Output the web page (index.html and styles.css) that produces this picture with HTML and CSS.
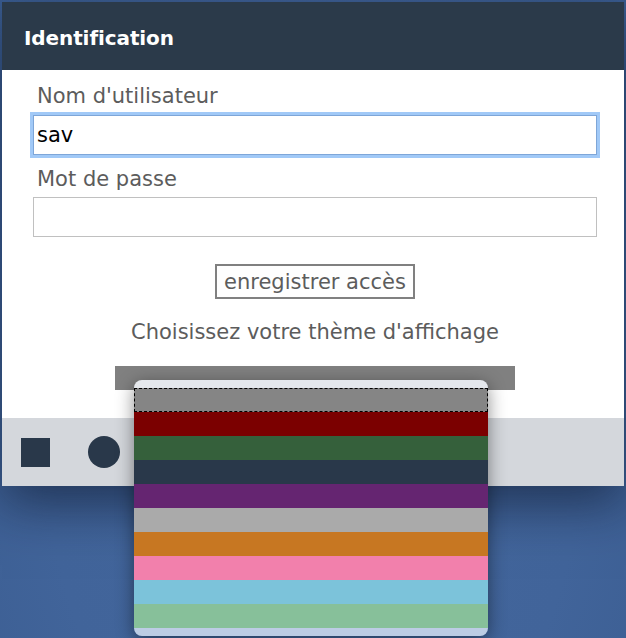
FILE: index.html
```
<!DOCTYPE html>
<html lang="fr">
<head>
    <meta charset="UTF-8">
    <meta name="viewport" content="width=device-width, initial-scale=1.0">
    <title>Identification</title>
    <link rel="stylesheet" href="styles.css">
</head>
<body>
    <div class="window">
        <header class="window-header">
            <h1>Identification</h1>
        </header>
        <div class="window-body">
            <label for="user" class="field-label">Nom d'utilisateur</label>
            <input type="text" id="user" class="field field-focus" value="sav">
            <label for="pass" class="field-label second">Mot de passe</label>
            <input type="password" id="pass" class="field">
            <div class="center">
                <button class="save-btn">enregistrer accès</button>
                <p class="theme-title">Choisissez votre thème d'affichage</p>
                <div class="theme-select"></div>
            </div>
        </div>
        <footer class="window-footer">
            <span class="shape square"></span>
            <span class="shape circle"></span>
        </footer>

        <ul class="theme-list">
            <li class="opt selected" style="background:#858585"></li>
            <li class="opt" style="background:#7b0000"></li>
            <li class="opt" style="background:#35603b"></li>
            <li class="opt" style="background:#29384a"></li>
            <li class="opt" style="background:#652571"></li>
            <li class="opt" style="background:#aaaaaa"></li>
            <li class="opt" style="background:#c77722"></li>
            <li class="opt" style="background:#f280ac"></li>
            <li class="opt" style="background:#7cc3da"></li>
            <li class="opt" style="background:#87c09a"></li>
        </ul>
    </div>
</body>
</html>
```

FILE: styles.css
```
html, body {
    height: 100%;
}

body {
    margin: 0;
    padding: 2px;
    box-sizing: border-box;
    font-family: 'DejaVu Sans', sans-serif;
    background: radial-gradient(ellipse at 50% 70%, #44679d 0%, #41649a 60%, #3a5c90 100%);
    overflow: hidden;
}

.window {
    position: relative;
    width: 622px;
    height: 484px;
    display: flex;
    flex-direction: column;
    background-color: white;
    box-shadow: 0 18px 50px rgba(10, 20, 40, 0.6);
}

.window-header {
    height: 68px;
    background-color: #2b3a4a;
    display: flex;
    align-items: center;
    padding-left: 22px;
    padding-top: 3px;
    box-sizing: border-box;
}

.window-header h1 {
    margin: 0;
    color: white;
    font-size: 20px;
    font-weight: bold;
    letter-spacing: -0.1px;
}

.window-body {
    flex-grow: 1;
    padding: 14px 27px 0 31px;
    display: flex;
    flex-direction: column;
}

.field-label {
    display: block;
    font-size: 21px;
    line-height: 24px;
    color: #5c5c5c;
    padding-left: 4px;
    margin-bottom: 7px;
}

.field-label.second {
    margin-top: 12px;
    margin-bottom: 6px;
}

.field {
    height: 40px;
    box-sizing: border-box;
    border: 1px solid #c0c0c0;
    padding: 0 3px;
    font-family: 'DejaVu Sans', sans-serif;
    font-size: 21px;
    color: black;
    outline: none;
    margin: 0;
}

.field-focus {
    border-color: #7ea6d8;
    box-shadow: 0 0 0 3px #a1c9f7;
}

.center {
    display: flex;
    flex-direction: column;
    align-items: center;
}

.save-btn {
    margin-top: 27px;
    width: 200px;
    height: 35px;
    box-sizing: border-box;
    border: 2px solid #808080;
    background-color: #fefefe;
    font-family: 'DejaVu Sans', sans-serif;
    font-size: 21px;
    color: #5c5c5c;
    padding: 0;
    border-radius: 0;
}

.theme-title {
    margin: 21px 0 0 0;
    font-size: 21px;
    line-height: 24px;
    color: #5c5c5c;
}

.theme-select {
    margin-top: 22px;
    width: 400px;
    height: 24px;
    background-color: #808080;
}

.window-footer {
    height: 68px;
    background-color: #d4d7dc;
    display: flex;
    align-items: center;
    padding-left: 19px;
    gap: 38px;
}

.shape {
    background-color: #29384a;
}

.square {
    width: 29px;
    height: 29px;
}

.circle {
    width: 32px;
    height: 32px;
    border-radius: 50%;
}

.theme-list {
    position: absolute;
    left: 132px;
    top: 378px;
    width: 354px;
    margin: 0;
    padding: 8px 0;
    list-style: none;
    border-radius: 8px;
    background: linear-gradient(to bottom, #e5e8ec 0, #e5e8ec 8px, #bccce4 8px);
    box-shadow: 0 4px 18px rgba(0, 0, 0, 0.45);
}

.opt {
    height: 24px;
}

.opt.selected {
    outline: 1px dashed black;
    outline-offset: -1px;
}
```
